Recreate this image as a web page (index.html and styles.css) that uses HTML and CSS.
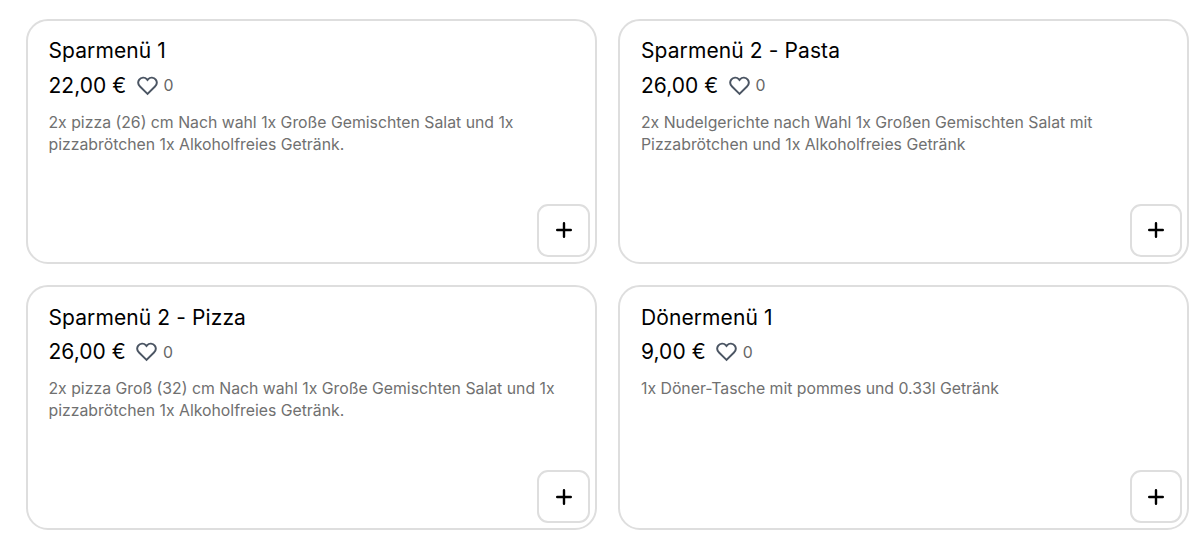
FILE: index.html
```html
<!DOCTYPE html>
<html lang="de">
<head>
    <meta charset="utf-8">
    <title>Speisekarte</title>
    <link rel="stylesheet" href="styles.css">
</head>
<body>
    <div class="menu">
        <div class="card">
            <h2>Sparmenü 1</h2>
            <div class="price-row">
                <span class="price">22,00 €</span>
                <svg class="heart" viewBox="0 0 24 24"><path d="M12 20.8L4.2 13C2.2 11 1.9 8 3.4 5.9C5.3 3.3 9.2 3 11.2 5.3L12 6.2L12.8 5.3C14.8 3 18.7 3.3 20.6 5.9C22.1 8 21.8 11 19.8 13Z"/></svg>
                <span class="likes">0</span>
            </div>
            <p>2x pizza (26) cm Nach wahl 1x Große Gemischten Salat und 1x<br>pizzabrötchen 1x Alkoholfreies Getränk.</p>
            <button class="add"><svg viewBox="0 0 16 16"><path d="M8 1.2V14.8M1.2 8H14.8"/></svg></button>
        </div>
        <div class="card">
            <h2>Sparmenü 2 - Pasta</h2>
            <div class="price-row">
                <span class="price">26,00 €</span>
                <svg class="heart" viewBox="0 0 24 24"><path d="M12 20.8L4.2 13C2.2 11 1.9 8 3.4 5.9C5.3 3.3 9.2 3 11.2 5.3L12 6.2L12.8 5.3C14.8 3 18.7 3.3 20.6 5.9C22.1 8 21.8 11 19.8 13Z"/></svg>
                <span class="likes">0</span>
            </div>
            <p>2x Nudelgerichte nach Wahl 1x Großen Gemischten Salat mit<br>Pizzabrötchen und 1x Alkoholfreies Getränk</p>
            <button class="add"><svg viewBox="0 0 16 16"><path d="M8 1.2V14.8M1.2 8H14.8"/></svg></button>
        </div>
        <div class="card">
            <h2>Sparmenü 2 - Pizza</h2>
            <div class="price-row">
                <span class="price">26,00 €</span>
                <svg class="heart" viewBox="0 0 24 24"><path d="M12 20.8L4.2 13C2.2 11 1.9 8 3.4 5.9C5.3 3.3 9.2 3 11.2 5.3L12 6.2L12.8 5.3C14.8 3 18.7 3.3 20.6 5.9C22.1 8 21.8 11 19.8 13Z"/></svg>
                <span class="likes">0</span>
            </div>
            <p>2x pizza Groß (32) cm Nach wahl 1x Große Gemischten Salat und 1x<br>pizzabrötchen 1x Alkoholfreies Getränk.</p>
            <button class="add"><svg viewBox="0 0 16 16"><path d="M8 1.2V14.8M1.2 8H14.8"/></svg></button>
        </div>
        <div class="card">
            <h2>Dönermenü 1</h2>
            <div class="price-row">
                <span class="price">9,00 €</span>
                <svg class="heart" viewBox="0 0 24 24"><path d="M12 20.8L4.2 13C2.2 11 1.9 8 3.4 5.9C5.3 3.3 9.2 3 11.2 5.3L12 6.2L12.8 5.3C14.8 3 18.7 3.3 20.6 5.9C22.1 8 21.8 11 19.8 13Z"/></svg>
                <span class="likes">0</span>
            </div>
            <p>1x Döner-Tasche mit pommes und 0.33l Getränk</p>
            <button class="add"><svg viewBox="0 0 16 16"><path d="M8 1.2V14.8M1.2 8H14.8"/></svg></button>
        </div>
    </div>
</body>
</html>
```
FILE: styles.css
```css
* {
    box-sizing: border-box;
}

body {
    margin: 0;
    background-color: #fff;
    font-family: Inter, sans-serif;
}

.menu {
    display: grid;
    grid-template-columns: 571px 571px;
    grid-auto-rows: 245px;
    gap: 21.4px 21.5px;
    padding: 18.6px 0 0 25.9px;
}

.card {
    display: flex;
    flex-direction: column;
    padding: 16.9px 5px 5px 20.6px;
    border: 2px solid #dedede;
    border-radius: 22px;
}

h2 {
    margin: 0;
    font-size: 21px;
    font-weight: 400;
    letter-spacing: 0.1px;
    line-height: 28px;
    color: #000;
}

.price-row {
    display: flex;
    align-items: center;
    height: 39px;
    margin-top: 0.3px;
}

.price {
    font-size: 21px;
    font-weight: 370;
    letter-spacing: 0.05px;
    color: #000;
}

.heart {
    width: 23px;
    height: 23px;
    margin-left: 9.5px;
    fill: none;
    stroke: #4b5563;
    stroke-width: 2;
}

.likes {
    margin-top: 1px;
    margin-left: 4.5px;
    font-size: 15.8px;
    color: #666;
}

p {
    margin: 7px 0 0;
    font-size: 15.8px;
    line-height: 22px;
    color: #707070;
}

.add {
    display: flex;
    align-items: center;
    justify-content: center;
    width: 52.5px;
    height: 52.5px;
    margin-top: auto;
    align-self: flex-end;
    padding: 0;
    background-color: #fff;
    border: 2px solid #dedede;
    border-radius: 11px;
    cursor: pointer;
}

.add svg {
    width: 16px;
    height: 16px;
    fill: none;
    stroke: #000;
    stroke-width: 2.4;
    stroke-linecap: round;
}
```
